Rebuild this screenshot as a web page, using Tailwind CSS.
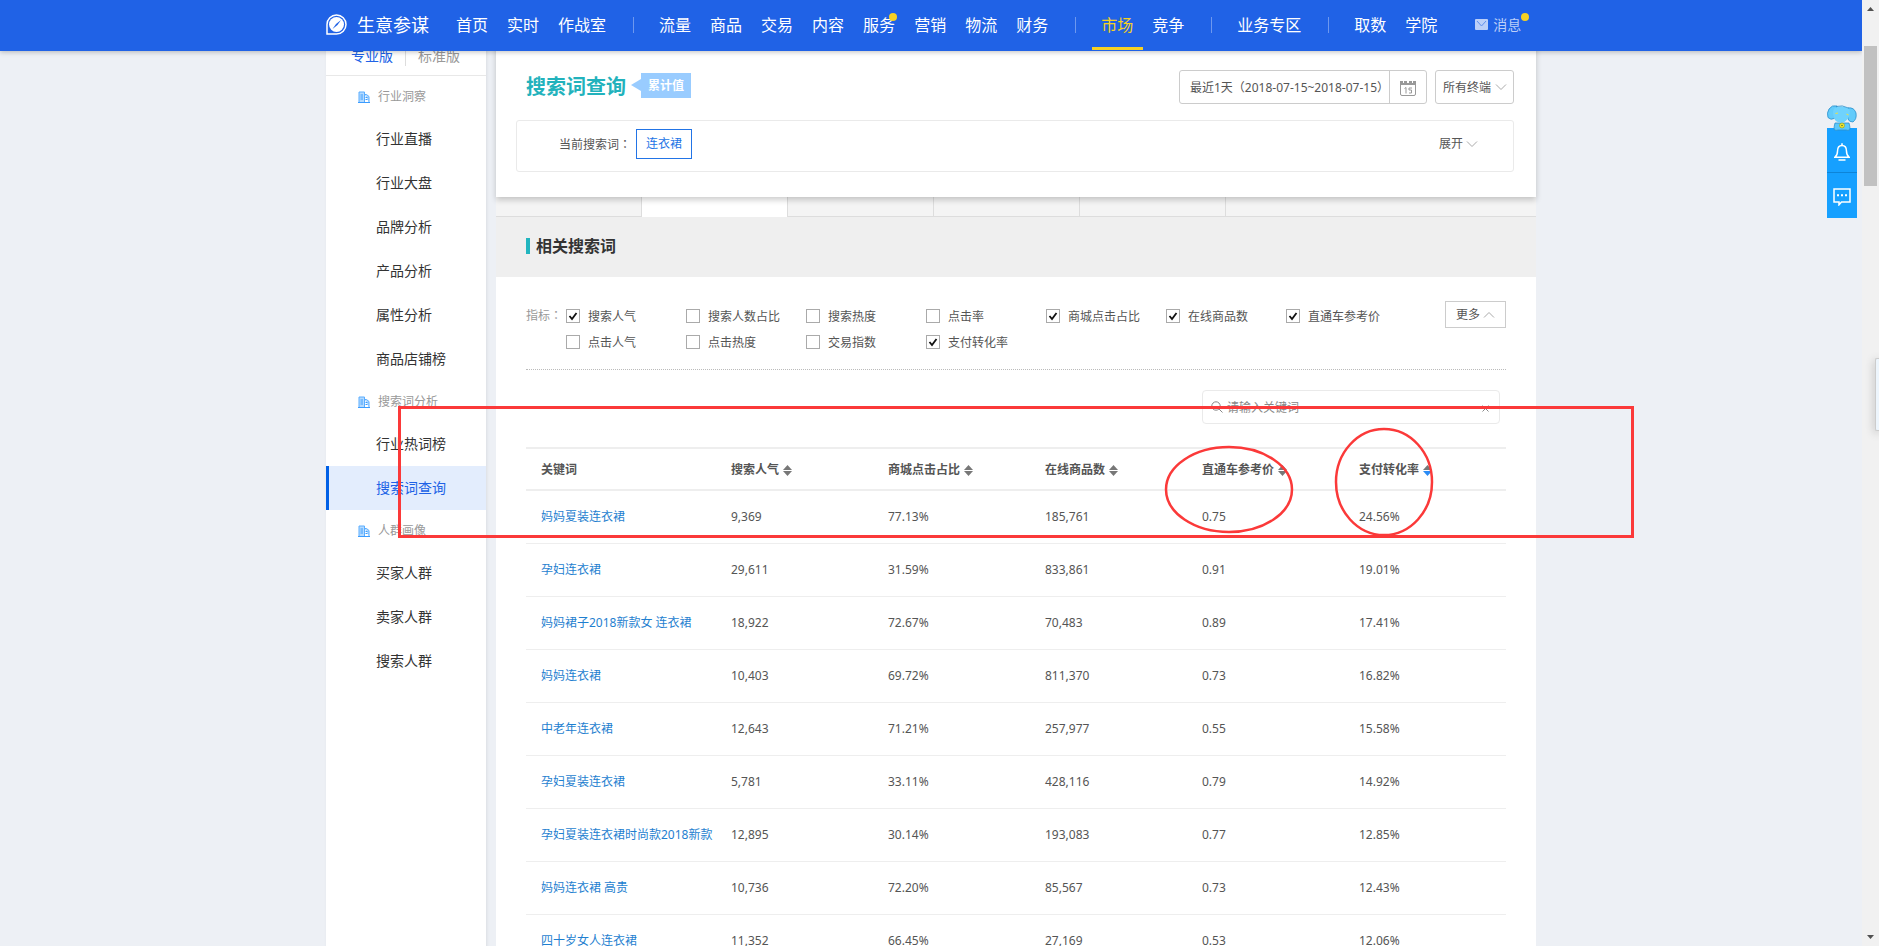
<!DOCTYPE html>
<html lang="zh-CN">
<head>
<meta charset="utf-8">
<title>生意参谋 - 搜索词查询</title>
<script src="https://cdn.jsdelivr.net/npm/@tailwindcss/browser@4"></script>
</head>
<body class="flex h-screen overflow-hidden bg-[#edf0f5] font-['Noto_Sans','Noto_Sans_CJK_SC',sans-serif] text-xs text-[#555]">

<svg class="hidden" aria-hidden="true">
  <symbol id="building" viewBox="0 0 12 12">
    <path d="M1 11V1h5.500v10M6.500 3.500h2l2.500 2V11" fill="#b5dbff" stroke="#5aadff"/>
    <path d="M0 11.500h12" stroke="#3b9cff"/>
    <path d="M2.500 4H5M2.500 6H5M2.500 8H5M7.500 6.500h2M7.500 8.500h2" stroke="#3b9cff"/>
  </symbol>
  <symbol id="chevron" viewBox="0 0 12 8"><path d="M1 1.500l5 5 5-5" fill="none" stroke="#aaa"/></symbol>
  <symbol id="sort" viewBox="0 0 9 11"><path d="M4.500 0L9 5H0z" fill="#777"/><path d="M4.500 11L9 6H0z" fill="currentColor"/></symbol>
</svg>

<div class="relative min-w-0 flex-1 overflow-hidden">

  <!-- Top navigation, fixed above the scrolled page -->
  <header class="absolute inset-x-0 top-0 z-20 h-[51px] bg-[#2062e6] text-white shadow-[0_1px_5px_rgba(0,0,0,0.25)]">
    <div class="mx-auto flex h-full max-w-[1210px] items-center whitespace-nowrap pb-[2px] text-base">
      <a href="#" class="mr-[18px] flex items-center gap-[10px] text-lg leading-6">
        <svg class="h-[21px] w-[21px]" viewBox="0 0 21 21" fill="none">
          <path d="M1 20V10.500A9.500 9.500 0 1 1 10.500 20z" stroke="#fff" stroke-width="1.500"/>
          <circle cx="10.500" cy="10.500" r="7.500" fill="#fff"/>
          <path d="M15 6l-3.500 5-5 4 3.500-5z" fill="#2062e6"/>
        </svg>
        生意参谋
      </a>
      <nav class="flex h-full items-center leading-6">
        <a href="#" class="pl-[9px] pr-[10px]">首页</a>
        <a href="#" class="pl-[9px] pr-[10px]">实时</a>
        <a href="#" class="pl-[9px] pr-[10px]">作战室</a>
        <span class="ml-[17px] mr-4 h-4 w-px bg-white/35"></span>
        <a href="#" class="pl-[9px] pr-[10px]">流量</a>
        <a href="#" class="pl-[9px] pr-[10px]">商品</a>
        <a href="#" class="pl-[9px] pr-[10px]">交易</a>
        <a href="#" class="pl-[9px] pr-[10px]">内容</a>
        <a href="#" class="relative pl-[9px] pr-[10px]">服务<i class="absolute right-2 top-0 h-2 w-2 rounded-full bg-[#f6d123]"></i></a>
        <a href="#" class="pl-[9px] pr-[10px]">营销</a>
        <a href="#" class="pl-[9px] pr-[10px]">物流</a>
        <a href="#" class="pl-[9px] pr-[10px]">财务</a>
        <span class="ml-[17px] mr-4 h-4 w-px bg-white/35"></span>
        <a href="#" class="relative flex h-full items-center pl-[9px] pr-[10px] text-[#f6d123]">市场<i class="absolute inset-x-0 -bottom-px h-[3px] bg-[#f6d123]"></i></a>
        <a href="#" class="pl-[9px] pr-[10px]">竞争</a>
        <span class="ml-[17px] mr-4 h-4 w-px bg-white/35"></span>
        <a href="#" class="pl-[9px] pr-[10px]">业务专区</a>
        <span class="ml-[17px] mr-4 h-4 w-px bg-white/35"></span>
        <a href="#" class="pl-[9px] pr-[10px]">取数</a>
        <a href="#" class="pl-[9px] pr-[10px]">学院</a>
        <a href="#" class="ml-7 flex items-center gap-[5px] text-sm text-[#bccff8]">
          <svg class="h-[11px] w-[13px]" viewBox="0 0 13 11"><rect width="13" height="11" rx="1" fill="#bccff8"/><path d="M2 2l4.500 5L11 2" fill="none" stroke="#5f8eee"/></svg>
          <span class="relative">消息<i class="absolute left-full -top-0.5 h-2 w-2 rounded-full bg-[#f6d123]"></i></span>
        </a>
      </nav>
    </div>
  </header>

  <div class="mx-auto flex min-h-screen max-w-[1210px] gap-[10px]">

    <!-- Side menu -->
    <aside class="w-40 shrink-0 bg-white text-sm leading-5 text-[#333] shadow-[1px_0_3px_rgba(0,0,0,0.08)]">
      <div class="flex h-[76px] items-end border-b border-[#e8e8e8] pb-[9px]">
        <a href="#" class="pl-[25px] text-[#2062e6]">专业版</a>
        <span class="ml-3 h-5 w-px bg-[#ddd]"></span>
        <a href="#" class="pl-3 text-[#999]">标准版</a>
      </div>
      <h3 class="flex h-[41px] items-center gap-2 pl-8 text-xs text-[#999]"><svg class="h-3 w-3"><use href="#building"/></svg>行业洞察</h3>
      <a href="#" class="flex h-11 items-center pl-[50px]">行业直播</a>
      <a href="#" class="flex h-11 items-center pl-[50px]">行业大盘</a>
      <a href="#" class="flex h-11 items-center pl-[50px]">品牌分析</a>
      <a href="#" class="flex h-11 items-center pl-[50px]">产品分析</a>
      <a href="#" class="flex h-11 items-center pl-[50px]">属性分析</a>
      <a href="#" class="flex h-11 items-center pl-[50px]">商品店铺榜</a>
      <h3 class="flex h-[41px] items-center gap-2 pl-8 text-xs text-[#999]"><svg class="h-3 w-3"><use href="#building"/></svg>搜索词分析</h3>
      <a href="#" class="flex h-11 items-center pl-[50px]">行业热词榜</a>
      <a href="#" class="flex h-11 items-center border-l-[3px] border-[#0060e6] bg-[#e3edfd] pl-[47px] text-[#2062e6]">搜索词查询</a>
      <h3 class="flex h-[41px] items-center gap-2 pl-8 text-xs text-[#999]"><svg class="h-3 w-3"><use href="#building"/></svg>人群画像</h3>
      <a href="#" class="flex h-11 items-center pl-[50px]">买家人群</a>
      <a href="#" class="flex h-11 items-center pl-[50px]">卖家人群</a>
      <a href="#" class="flex h-11 items-center pl-[50px]">搜索人群</a>
    </aside>

    <main class="min-w-0 flex-1 bg-white">

      <!-- Page title and filters -->
      <section class="relative z-10 bg-white pb-[25px] pl-5 pr-[22px] pt-[70px] shadow-[0_3px_6px_rgba(0,0,0,0.2)]">
        <div class="flex h-[34px] items-center">
          <h1 class="pl-[10px] text-xl font-bold leading-7 text-[#22b2bc]">搜索词查询</h1>
          <span class="ml-[5px] flex items-center pb-1">
            <svg class="h-3 w-[10px]" viewBox="0 0 10 12"><path d="M0 6l10-6v12z" fill="#99ccff"/></svg>
            <span class="bg-[#99ccff] px-[7px] text-xs font-bold leading-[25px] text-white">累计值</span>
          </span>
          <button class="ml-auto flex h-[34px] items-center rounded-[3px] border border-[#ccc] pl-[10px]">
            <span class="flex h-full items-center border-r border-[#ccc] pt-[2px]">最近1天（2018-07-15~2018-07-15）</span>
            <svg class="mx-[10px] mt-[2px] h-4 w-4" viewBox="0 0 16 16" fill="none">
              <path d="M.5 2v12a1.500 1.500 0 0 0 1.500 1.500h12a1.500 1.500 0 0 0 1.500-1.500V2" stroke="#999"/>
              <path d="M0 1h3v2h1V1h3v2h2V1h3v2h1V1h3v4H0z" fill="#999"/>
              <path d="M4.500 8.500L6 7.500v6M12 8H9v2h2.500v3H9" stroke="#999"/>
            </svg>
          </button>
          <label class="relative ml-2 flex items-center">
            <select aria-label="终端" class="h-[34px] w-[79px] appearance-none rounded-[3px] border border-[#ccc] bg-white pl-[7px] pt-[2px] text-xs"><option>所有终端</option></select>
            <svg class="pointer-events-none absolute right-[7px] h-2 w-3"><use href="#chevron"/></svg>
          </label>
        </div>
        <div class="mt-4 flex h-[52px] items-center rounded-[3px] border border-[#eaeaea] pb-1 pl-[42px] pr-[35px]">
          <span>当前搜索词<span class="font-['Noto_Sans_CJK_TC']" lang="zh-TW">：</span></span>
          <button class="ml-[5px] h-[30px] border border-[#2274e6] px-[9px] text-[#2274e6]">连衣裙</button>
          <button class="ml-auto flex items-center gap-[3px]">展开<svg class="h-2 w-3"><use href="#chevron"/></svg></button>
        </div>
      </section>

      <!-- Tab strip, mostly tucked under the filter card -->
      <div class="flex h-5 bg-[#efefef]">
        <div class="w-[146px] border-b border-r border-[#ddd] bg-[#f4f4f4]"></div>
        <div class="w-[145px] bg-white"></div>
        <div class="w-[146px] border-b border-l border-[#ddd] bg-[#f4f4f4]"></div>
        <div class="w-[146px] border-b border-l border-[#ddd] bg-[#f4f4f4]"></div>
        <div class="w-[146px] border-b border-l border-[#ddd] bg-[#f4f4f4]"></div>
        <div class="flex-1 border-b border-l border-[#ddd] bg-[#f4f4f4]"></div>
      </div>

      <div class="flex h-[60px] items-center bg-[#efefef] pb-[2px] pl-[30px]">
        <span class="mr-1.5 h-4 w-1 bg-[#22b5bf]"></span>
        <h2 class="text-base font-bold leading-6 text-[#333]">相关搜索词</h2>
      </div>

      <div class="px-[30px] pt-6">
        <!-- Metric choices -->
        <div class="flex items-start border-b border-dotted border-[#bbb] pb-[14px]">
          <span class="w-10 shrink-0 pt-[6px] leading-4 text-[#999]">指标<span class="font-['Noto_Sans_CJK_TC']" lang="zh-TW">：</span></span>
          <div class="grid grid-cols-[repeat(7,120px)] pt-[2px] [&_label]:flex [&_label]:h-[26px] [&_label]:items-center [&_label]:gap-2 [&_span]:pt-[2px] [&_input]:h-[14px] [&_input]:w-[14px] [&_input]:appearance-none [&_input]:border [&_input]:border-[#aaa] [&_input]:bg-white [&_input]:bg-center [&_input]:bg-no-repeat [&_input:checked]:bg-[url('data:image/svg+xml,%3Csvg%20xmlns=%22http://www.w3.org/2000/svg%22%20width=%2210%22%20height=%2210%22%3E%3Cpath%20d=%22M1.500%205l2.500%203%204.500-6%22%20fill=%22none%22%20stroke=%22%23111%22%20stroke-width=%221.800%22/%3E%3C/svg%3E')]">
            <label><input type="checkbox" checked><span>搜索人气</span></label>
            <label><input type="checkbox"><span>搜索人数占比</span></label>
            <label><input type="checkbox"><span>搜索热度</span></label>
            <label><input type="checkbox"><span>点击率</span></label>
            <label><input type="checkbox" checked><span>商城点击占比</span></label>
            <label><input type="checkbox" checked><span>在线商品数</span></label>
            <label><input type="checkbox" checked><span>直通车参考价</span></label>
            <label><input type="checkbox"><span>点击人气</span></label>
            <label><input type="checkbox"><span>点击热度</span></label>
            <label><input type="checkbox"><span>交易指数</span></label>
            <label><input type="checkbox" checked><span>支付转化率</span></label>
          </div>
          <button class="ml-auto flex h-[27px] items-center gap-[3px] border border-[#ccc] px-[10px]">更多<svg class="h-2 w-3 rotate-180"><use href="#chevron"/></svg></button>
        </div>

        <!-- Keyword search -->
        <div class="ml-auto mr-[6px] mt-5 flex h-[34px] w-[298px] items-center rounded-[4px] border border-[#eaeaea] px-2">
          <svg class="h-3 w-3 shrink-0" viewBox="0 0 12 12" fill="none" stroke="#888"><circle cx="5" cy="5" r="4.200"/><path d="M8 8l3.500 3.500"/></svg>
          <input type="text" aria-label="关键词" placeholder="请输入关键词" class="min-w-0 flex-1 pl-1 pt-[2px] text-xs outline-none placeholder:text-[#888]">
          <button aria-label="清除" class="mr-[2px] pt-[2px]"><svg class="h-[7px] w-[7px]" viewBox="0 0 7 7"><path d="M.5.5l6 6M6.500.5l-6 6" stroke="#888"/></svg></button>
        </div>

        <!-- Keyword data -->
        <table class="mt-[23px] w-full table-fixed border-collapse text-left leading-4">
          <colgroup><col class="w-[190px]"><col class="w-[157px]"><col class="w-[157px]"><col class="w-[157px]"><col class="w-[157px]"><col></colgroup>
          <thead>
            <tr class="h-[42px] border-y-2 border-[#eee] whitespace-nowrap [&_th]:pl-[15px] [&_th]:pt-[2px]">
              <th class="font-bold">关键词</th>
              <th><button class="flex items-center gap-1 font-bold">搜索人气<svg class="h-[11px] w-[9px] text-[#777]"><use href="#sort"/></svg></button></th>
              <th><button class="flex items-center gap-1 font-bold">商城点击占比<svg class="h-[11px] w-[9px] text-[#777]"><use href="#sort"/></svg></button></th>
              <th><button class="flex items-center gap-1 font-bold">在线商品数<svg class="h-[11px] w-[9px] text-[#777]"><use href="#sort"/></svg></button></th>
              <th><button class="flex items-center gap-1 font-bold">直通车参考价<svg class="h-[11px] w-[9px] text-[#777]"><use href="#sort"/></svg></button></th>
              <th><button class="flex items-center gap-1 font-bold">支付转化率<svg class="h-[11px] w-[9px] text-[#2b8cf5]"><use href="#sort"/></svg></button></th>
            </tr>
          </thead>
          <tbody class="[&_td]:pl-[15px] [&_td]:pt-px [&_tr]:h-[53px] [&_tr]:border-b [&_tr]:border-[#eee] [&_a]:text-[#1f7fd0] [&_a]:whitespace-nowrap">
            <tr><td><a href="#">妈妈夏装连衣裙</a></td><td>9,369</td><td>77.13%</td><td>185,761</td><td>0.75</td><td>24.56%</td></tr>
            <tr><td><a href="#">孕妇连衣裙</a></td><td>29,611</td><td>31.59%</td><td>833,861</td><td>0.91</td><td>19.01%</td></tr>
            <tr><td><a href="#">妈妈裙子2018新款女 连衣裙</a></td><td>18,922</td><td>72.67%</td><td>70,483</td><td>0.89</td><td>17.41%</td></tr>
            <tr><td><a href="#">妈妈连衣裙</a></td><td>10,403</td><td>69.72%</td><td>811,370</td><td>0.73</td><td>16.82%</td></tr>
            <tr><td><a href="#">中老年连衣裙</a></td><td>12,643</td><td>71.21%</td><td>257,977</td><td>0.55</td><td>15.58%</td></tr>
            <tr><td><a href="#">孕妇夏装连衣裙</a></td><td>5,781</td><td>33.11%</td><td>428,116</td><td>0.79</td><td>14.92%</td></tr>
            <tr><td><a href="#">孕妇夏装连衣裙时尚款2018新款</a></td><td>12,895</td><td>30.14%</td><td>193,083</td><td>0.77</td><td>12.85%</td></tr>
            <tr><td><a href="#">妈妈连衣裙 高贵</a></td><td>10,736</td><td>72.20%</td><td>85,567</td><td>0.73</td><td>12.43%</td></tr>
            <tr><td><a href="#">四十岁女人连衣裙</a></td><td>11,352</td><td>66.45%</td><td>27,169</td><td>0.53</td><td>12.06%</td></tr>
          </tbody>
        </table>
      </div>
    </main>
  </div>

  <!-- Floating helper -->
  <div class="absolute right-[5px] top-[105px] z-10 flex w-[30px] flex-col">
    <svg class="relative z-10 -mb-[3px] h-[26px] w-[30px]" viewBox="0 0 30 26">
      <path d="M8 18q-1 3-1 6.500 2 1.500 4 .5h8q2 1 4-.5 0-3.500-1-6.500z" fill="#5cc8fa" stroke="#2b8fcc" stroke-width=".8"/>
      <path d="M10 1Q5-.5 2 4-.5 8 1 12.500q3 3 6 1l3-2z" fill="#62cbfb" stroke="#2b8fcc" stroke-width=".8"/>
      <path d="M21 3q6-1 8 5 1 6-3 9-4 0-5-3z" fill="#62cbfb" stroke="#2b8fcc" stroke-width=".8"/>
      <path d="M7 3.500Q14-.5 22 3.500q2 5-1 10-3 4-7 4.500-6-1-7-5.500Q5 8 7 3.500z" fill="#6fd2fd"/>
      <path d="M9 1.500Q15-.5 22 3.200" fill="none" stroke="#2b8fcc" stroke-width=".8"/>
      <path d="M8.500 8.500l2.500-.5M19.500 9l2 1" stroke="#f3e13a"/>
      <circle cx="15" cy="20.500" r="2.500" fill="#f7e52c" stroke="#8a9a20" stroke-width=".6"/><circle cx="15" cy="20.500" r=".8" fill="#4b7d3a"/>
    </svg>
    <button aria-label="通知" class="flex h-[45px] items-center justify-center border-b border-[#0d84d8] bg-[#16a0ff] pt-[3px]">
      <svg class="h-[18px] w-4" viewBox="0 0 16 18" fill="none" stroke="#fff" stroke-width="1.500"><path d="M1 14.200q2.500-2 2.500-6Q3.500 2.500 8 2.500t4.500 5.700q0 4 2.500 6z"/><path d="M8 .2v2.300M4.500 17h7"/></svg>
    </button>
    <button aria-label="留言" class="flex h-[45px] items-center justify-center bg-[#16a0ff] pt-[2px]">
      <svg class="h-[18px] w-[18px]" viewBox="0 0 18 18" fill="none" stroke="#fff" stroke-width="1.500"><path d="M1 1h16v13H8.500L6 16.800V14H1z"/><path d="M4 7.300h2m2 0h2m2 0h2" stroke-width="2"/></svg>
    </button>
  </div>

  <!-- Red highlight marks -->
  <svg class="pointer-events-none absolute left-1/2 top-[406px] z-10 h-[132px] w-[1236px] -translate-x-[533px] overflow-visible" fill="none" stroke="#fb3939" aria-hidden="true">
    <rect x="1.500" y="1.500" width="1233" height="129" stroke-width="3"/>
    <ellipse cx="831" cy="83.500" rx="63" ry="42.500" stroke-width="2.500"/>
    <ellipse cx="986" cy="76" rx="48" ry="53" stroke-width="2.500"/>
  </svg>
</div>

<!-- Window scroll bar -->
<div class="relative z-30 flex w-[17px] shrink-0 flex-col items-center bg-[#f1f1f1]">
  <svg class="mt-[7px] h-1 w-[7px]" viewBox="0 0 7 4"><path d="M3.500 0L7 4H0z" fill="#505050"/></svg>
  <div class="mt-[35px] h-[140px] w-[13px] bg-[#c1c1c1]"></div>
  <svg class="mb-[7px] mt-auto h-1 w-[7px]" viewBox="0 0 7 4"><path d="M3.500 4L7 0H0z" fill="#505050"/></svg>
  <div class="absolute right-0 top-[358px] h-[73px] w-1 rounded-l-[2px] border-y border-l border-[#ccc] bg-[#edf5fc] shadow-[0_2px_10px_rgba(0,0,0,0.3)]"></div>
</div>

</body>
</html>
